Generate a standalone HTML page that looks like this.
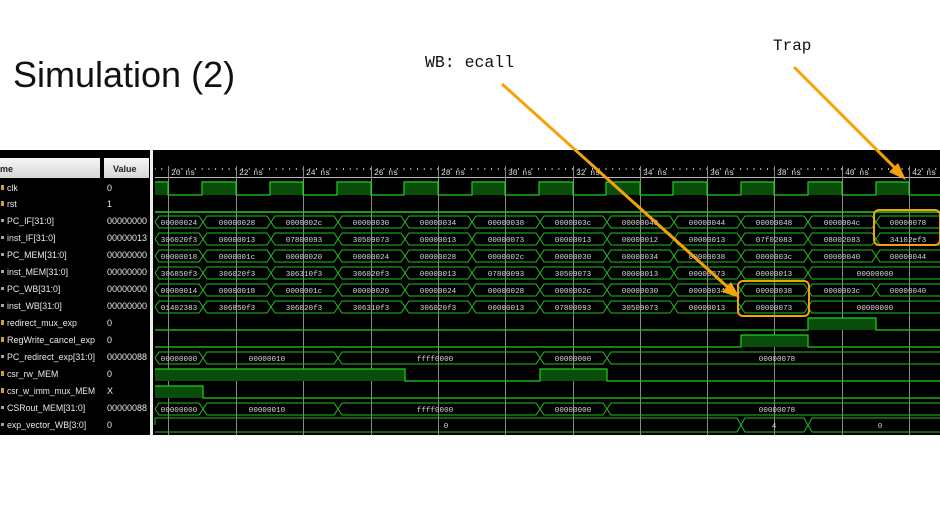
<!DOCTYPE html>
<html><head><meta charset="utf-8"><style>
html,body{margin:0;padding:0;background:#fff;width:940px;height:529px;overflow:hidden}
svg{display:block}
.t{font-family:"Liberation Mono",monospace;font-size:7.6px;fill:#d8d8d8;text-anchor:middle}
.n{font-family:"Liberation Sans",sans-serif;font-size:8.8px;fill:#e8e8e8}
.v{font-family:"Liberation Sans",sans-serif;font-size:9px;fill:#e8e8e8}
.r{font-family:"Liberation Mono",monospace;font-size:8px;fill:#e0e0e0}
</style></head><body>
<svg width="940" height="529" viewBox="0 0 940 529" xmlns="http://www.w3.org/2000/svg">
<defs>
<path id="full" fill="none" stroke="#1fbf1f" stroke-width="1" d="M155 0l4-6H199l4 6l-4 6H159zM203 0l4-6H267l4 6l-4 6H207zM271 0l4-6H334l4 6l-4 6H275zM338 0l4-6H401l4 6l-4 6H342zM405 0l4-6H468l4 6l-4 6H409zM472 0l4-6H536l4 6l-4 6H476zM540 0l4-6H603l4 6l-4 6H544zM607 0l4-6H670l4 6l-4 6H611zM674 0l4-6H737l4 6l-4 6H678zM741 0l4-6H804l4 6l-4 6H745zM808 0l4-6H872l4 6l-4 6H812zM876 0l4-6H940l4 6l-4 6H880z"/>
<path id="m10" fill="none" stroke="#1fbf1f" stroke-width="1" d="M155 0l4-6H199l4 6l-4 6H159zM203 0l4-6H267l4 6l-4 6H207zM271 0l4-6H334l4 6l-4 6H275zM338 0l4-6H401l4 6l-4 6H342zM405 0l4-6H468l4 6l-4 6H409zM472 0l4-6H536l4 6l-4 6H476zM540 0l4-6H603l4 6l-4 6H544zM607 0l4-6H670l4 6l-4 6H611zM674 0l4-6H737l4 6l-4 6H678zM741 0l4-6H804l4 6l-4 6H745zM808 0l4-6H940l4 6l-4 6H812z"/>
<path id="red" fill="none" stroke="#1fbf1f" stroke-width="1" d="M155 0l4-6H199l4 6l-4 6H159zM203 0l4-6H334l4 6l-4 6H207zM338 0l4-6H536l4 6l-4 6H342zM540 0l4-6H603l4 6l-4 6H544zM607 0l4-6H940l4 6l-4 6H611z"/>
<pattern id="tk" x="168" y="0" width="6.73" height="10" patternUnits="userSpaceOnUse"><rect x="0" y="7" width="1" height="3" fill="#bbb"/></pattern>
<linearGradient id="hg" x1="0" y1="0" x2="0" y2="1"><stop offset="0" stop-color="#f6f6f6"/><stop offset="1" stop-color="#d6d6d6"/></linearGradient>
</defs>
<rect x="0" y="0" width="940" height="150" fill="#fff"/>
<text x="13" y="87" font-family="Liberation Sans, sans-serif" font-size="36" fill="#111">Simulation (2)</text>
<text x="425" y="67" font-family="Liberation Mono, monospace" font-size="16.5" fill="#111">WB: ecall</text>
<text x="773" y="50" font-family="Liberation Mono, monospace" font-size="16" fill="#111">Trap</text>

<rect x="0" y="150" width="940" height="285" fill="#000"/>
<rect x="0" y="158" width="100" height="20" fill="url(#hg)"/>
<rect x="104" y="158" width="45" height="20" fill="url(#hg)"/>
<text x="0" y="172" font-family="Liberation Sans, sans-serif" font-size="9" font-weight="bold" fill="#222">me</text>
<text x="113" y="172" font-family="Liberation Sans, sans-serif" font-size="9" font-weight="bold" fill="#222">Value</text>
<rect x="101" y="150" width="3" height="285" fill="#000"/>
<rect x="150" y="150" width="3" height="285" fill="#eee"/>

<g class="n">
<text x="7" y="191">clk</text><text x="7" y="207">rst</text>
<text x="7" y="224">PC_IF[31:0]</text><text x="7" y="241">inst_IF[31:0]</text>
<text x="7" y="258">PC_MEM[31:0]</text><text x="7" y="275">inst_MEM[31:0]</text>
<text x="7" y="292">PC_WB[31:0]</text><text x="7" y="309">inst_WB[31:0]</text>
<text x="7" y="326">redirect_mux_exp</text><text x="7" y="343" textLength="88" lengthAdjust="spacingAndGlyphs">RegWrite_cancel_exp</text>
<text x="7" y="360" textLength="88" lengthAdjust="spacingAndGlyphs">PC_redirect_exp[31:0]</text><text x="7" y="377">csr_rw_MEM</text>
<text x="7" y="394" textLength="88" lengthAdjust="spacingAndGlyphs">csr_w_imm_mux_MEM</text><text x="7" y="411">CSRout_MEM[31:0]</text>
<text x="7" y="428">exp_vector_WB[3:0]</text>
</g>
<g fill="#c9a23a">
<rect x="1" y="185" width="3" height="5"/><rect x="1" y="201" width="3" height="5"/><rect x="1" y="320" width="3" height="5"/><rect x="1" y="337" width="3" height="5"/><rect x="1" y="371" width="3" height="5"/><rect x="1" y="388" width="3" height="5"/>
</g>
<g fill="#9ab">
<rect x="1" y="219" width="3" height="3"/><rect x="1" y="236" width="3" height="3"/><rect x="1" y="253" width="3" height="3"/><rect x="1" y="270" width="3" height="3"/><rect x="1" y="287" width="3" height="3"/><rect x="1" y="304" width="3" height="3"/><rect x="1" y="355" width="3" height="3"/><rect x="1" y="406" width="3" height="3"/><rect x="1" y="423" width="3" height="3"/>
</g>
<g class="v">
<text x="107" y="191">0</text><text x="107" y="207">1</text>
<text x="107" y="224">00000000</text><text x="107" y="241">00000013</text>
<text x="107" y="258">00000000</text><text x="107" y="275">00000000</text>
<text x="107" y="292">00000000</text><text x="107" y="309">00000000</text>
<text x="107" y="326">0</text><text x="107" y="343">0</text>
<text x="107" y="360">00000088</text><text x="107" y="377">0</text>
<text x="107" y="394">X</text><text x="107" y="411">00000088</text>
<text x="107" y="428">0</text>
</g>

<rect x="155" y="168" width="785" height="10" fill="url(#tk)"/>
<rect x="155" y="177" width="785" height="1" fill="#bbb"/>
<g class="r">
<text x="171" y="175">20 ns</text><text x="239" y="175">22 ns</text><text x="306" y="175">24 ns</text><text x="374" y="175">26 ns</text><text x="441" y="175">28 ns</text><text x="508" y="175">30 ns</text><text x="576" y="175">32 ns</text><text x="643" y="175">34 ns</text><text x="710" y="175">36 ns</text><text x="777" y="175">38 ns</text><text x="845" y="175">40 ns</text><text x="912" y="175">42 ns</text>
</g>
<g stroke="#8a8a8a" stroke-width="1">
<path d="M168.5 166V435M236.5 166V435M303.5 166V435M371.5 166V435M438.5 166V435M505.5 166V435M573.5 166V435M640.5 166V435M707.5 166V435M774.5 166V435M842.5 166V435M909.5 166V435"/>
</g>

<g fill="#0a4d0a">
<rect x="155" y="182" width="13" height="13"/><rect x="202" y="182" width="34" height="13"/><rect x="270" y="182" width="33" height="13"/><rect x="337" y="182" width="34" height="13"/><rect x="404" y="182" width="34" height="13"/><rect x="472" y="182" width="33" height="13"/><rect x="539" y="182" width="34" height="13"/><rect x="606" y="182" width="34" height="13"/><rect x="673" y="182" width="34" height="13"/><rect x="741" y="182" width="33" height="13"/><rect x="808" y="182" width="34" height="13"/><rect x="876" y="182" width="33" height="13"/>
</g>
<path fill="none" stroke="#1fcf1f" stroke-width="1.2" d="M155 182H168V195H202V182H236V195H270V182H303V195H337V182H371V195H404V182H438V195H472V182H505V195H539V182H573V195H606V182H640V195H673V182H707V195H741V182H774V195H808V182H842V195H876V182H909V195H940"/>
<path stroke="#1fcf1f" stroke-width="1.5" d="M155 212H940"/>

<use href="#full" y="222"/><use href="#full" y="239"/><use href="#full" y="256"/><use href="#m10" y="273"/><use href="#full" y="290"/><use href="#m10" y="307"/>
<use href="#red" y="358"/><use href="#red" y="409"/>
<path fill="none" stroke="#1fbf1f" d="M155 425l0-7H737l4 7l-4 7H155M741 425l4-7H804l4 7l-4 7H745zM808 425l4-7H944M808 425l4 7H944"/>

<rect x="808" y="318" width="68" height="12" fill="#0a4d0a"/>
<path fill="none" stroke="#1fcf1f" stroke-width="1.2" d="M155 330H808V318H876V330H940"/>
<rect x="741" y="335" width="67" height="12" fill="#0a4d0a"/>
<path fill="none" stroke="#1fcf1f" stroke-width="1.2" d="M155 347H741V335H808V347H940"/>
<rect x="155" y="369" width="250" height="12" fill="#0a4d0a"/><rect x="540" y="369" width="67" height="12" fill="#0a4d0a"/>
<path fill="none" stroke="#1fcf1f" stroke-width="1.2" d="M155 369H405V381H540V369H607V381H940"/>
<rect x="155" y="386" width="48" height="12" fill="#0a4d0a"/>
<path fill="none" stroke="#1fcf1f" stroke-width="1.2" d="M155 386H203V398H940"/>

<g class="t">
<g transform="translate(0,225)"><text x="179">00000024</text><text x="237">00000028</text><text x="304">0000002c</text><text x="371">00000030</text><text x="438">00000034</text><text x="506">00000038</text><text x="573">0000003c</text><text x="640">00000040</text><text x="707">00000044</text><text x="774">00000048</text><text x="842">0000004c</text><text x="908">00000078</text></g>
<g transform="translate(0,242)"><text x="179">306020f3</text><text x="237">00000013</text><text x="304">07800093</text><text x="371">30509073</text><text x="438">00000013</text><text x="506">00000073</text><text x="573">00000013</text><text x="640">00000012</text><text x="707">00000013</text><text x="774">07f02083</text><text x="842">08002083</text><text x="908">34102ef3</text></g>
<g transform="translate(0,259)"><text x="179">00000018</text><text x="237">0000001c</text><text x="304">00000020</text><text x="371">00000024</text><text x="438">00000028</text><text x="506">0000002c</text><text x="573">00000030</text><text x="640">00000034</text><text x="707">00000038</text><text x="774">0000003c</text><text x="842">00000040</text><text x="908">00000044</text></g>
<g transform="translate(0,276)"><text x="179">306850f3</text><text x="237">306020f3</text><text x="304">306310f3</text><text x="371">306020f3</text><text x="438">00000013</text><text x="506">07800093</text><text x="573">30509073</text><text x="640">00000013</text><text x="707">00000073</text><text x="774">00000013</text><text x="875">00000000</text></g>
<g transform="translate(0,293)"><text x="179">00000014</text><text x="237">00000018</text><text x="304">0000001c</text><text x="371">00000020</text><text x="438">00000024</text><text x="506">00000028</text><text x="573">0000002c</text><text x="640">00000030</text><text x="707">00000034</text><text x="774">00000038</text><text x="842">0000003c</text><text x="908">00000040</text></g>
<g transform="translate(0,310)"><text x="179">01402383</text><text x="237">306850f3</text><text x="304">306020f3</text><text x="371">306310f3</text><text x="438">306020f3</text><text x="506">00000013</text><text x="573">07800093</text><text x="640">30509073</text><text x="707">00000013</text><text x="774">00000073</text><text x="875">00000000</text></g>
<g transform="translate(0,361)"><text x="179">00000000</text><text x="267">00000010</text><text x="435">ffff0000</text><text x="573">00000000</text><text x="777">00000078</text></g>
<g transform="translate(0,412)"><text x="179">00000000</text><text x="267">00000010</text><text x="435">ffff0000</text><text x="573">00000000</text><text x="777">00000078</text></g>
<g transform="translate(0,428)"><text x="446">0</text><text x="774">4</text><text x="880">0</text></g>
</g>

<g fill="none" stroke="#f5a10e" stroke-width="2">
<rect x="874" y="210" width="66" height="35" rx="5"/>
<rect x="738" y="281" width="71" height="35" rx="5"/>
<path d="M502 84L732 291" stroke-width="3"/>
<path d="M794 67L900 173" stroke-width="3"/>
</g>
<g fill="#f5a10e">
<path d="M740 298L722 292L731 282Z"/>
<path d="M906 180L889 172L898 163Z"/>
</g>
</svg>
</body></html>
